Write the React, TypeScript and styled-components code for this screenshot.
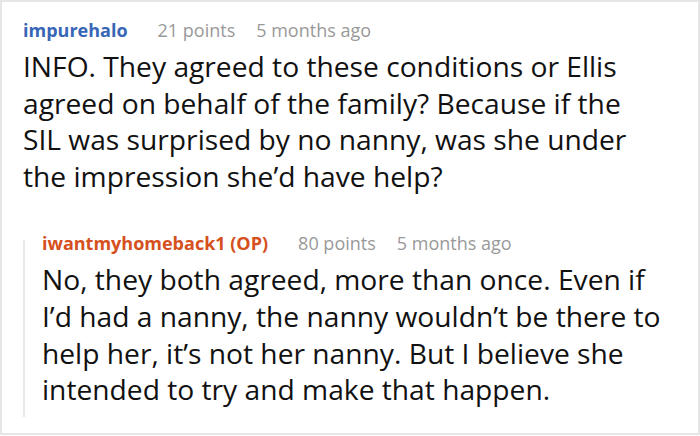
import React from 'react';
import styled, { createGlobalStyle } from 'styled-components';

const GlobalStyle = createGlobalStyle`
	html, body {
		margin: 0;
		padding: 0;
		background: #fff;
	}
	body {
		font-family: 'Open Sans', 'Noto Sans', sans-serif;
	}
`;

type CommentData = {
	author: string;
	op?: boolean;
	points: number;
	age: string;
	text: string;
};

const parent: CommentData = {
	author: 'impurehalo',
	points: 21,
	age: '5 months ago',
	text:
		'INFO. They agreed to these conditions or Ellis agreed on behalf of the family? Because if the SIL was surprised by no nanny, was she under the impression she\u2019d have help?',
};

const reply: CommentData = {
	author: 'iwantmyhomeback1 (OP)',
	op: true,
	points: 80,
	age: '5 months ago',
	text:
		'No, they both agreed, more than once. Even if I\u2019d had a nanny, the nanny wouldn\u2019t be there to help her, it\u2019s not her nanny. But I believe she intended to try and make that happen.',
};

const Meta: React.FC<{ comment: CommentData }> = ({ comment }) => (
	<MetaRow>
		<Author $op={comment.op}>{comment.author}</Author>
		<Muted>{comment.points} points</Muted>
		<Muted>{comment.age}</Muted>
	</MetaRow>
);

const App: React.FC = () => (
	<>
		<GlobalStyle />
		<Frame>
			<Comment>
				<Meta comment={parent} />
				<Body>{parent.text}</Body>
				<Replies>
					<Meta comment={reply} />
					<Body>{reply.text}</Body>
				</Replies>
			</Comment>
		</Frame>
	</>
);

export default App;

/**
 * Styled components
 */

const Frame = styled.div`
	box-sizing: border-box;
	width: 700px;
	height: 435px;
	border: 2px solid #e6e6e6;
	overflow: hidden;
`;

const Comment = styled.div`
	padding: 15px 36px 0 21px;
`;

const MetaRow = styled.div`
	display: flex;
	align-items: baseline;
	gap: 21px;
	font-size: 18px;
	line-height: 26px;
`;

const Author = styled.span<{ $op?: boolean }>`
	margin-right: 9px;
	font-weight: 700;
	color: ${({ $op }) => ($op ? '#d5501d' : '#3766b7')};
`;

const Muted = styled.span`
	color: #999;
`;

const Body = styled.p`
	margin: 5px 0 0;
	font-size: 28.2px;
	line-height: 36.6px;
	color: #111;
`;

const Replies = styled.div`
	position: relative;
	margin: 36px 0 0 0;
	padding-left: 19px;

	&::before {
		content: '';
		position: absolute;
		left: 0;
		top: 10px;
		bottom: -9px;
		width: 2px;
		background: #e8e8e8;
	}
`;
